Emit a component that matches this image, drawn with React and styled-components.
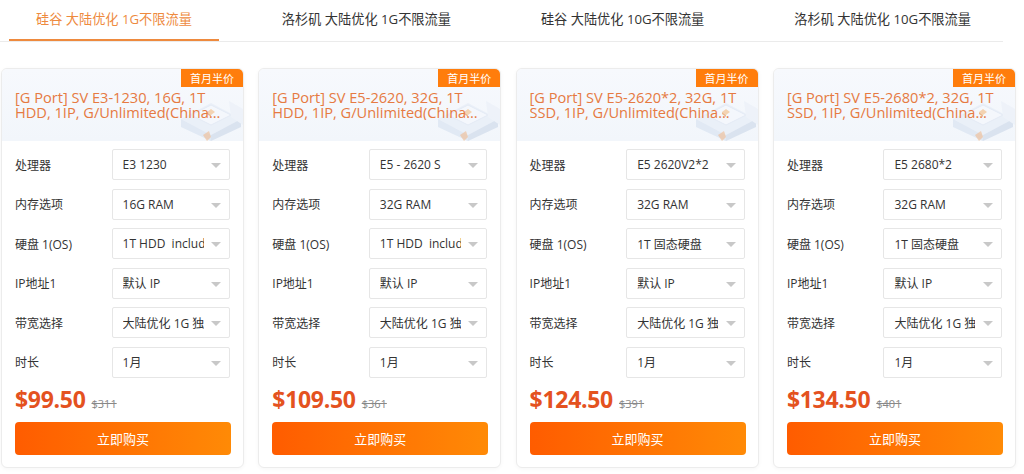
import React from "react";
import styled, { createGlobalStyle } from "styled-components";

const Global = createGlobalStyle`
  html, body { margin: 0; padding: 0; background: #fff; }
  body { font-family: "Open Sans", "Noto Sans CJK SC", sans-serif; color: #333; }
  * { box-sizing: border-box; }
`;

const Page = styled.div`
  width: 1024px;
  height: 474px;
  overflow: hidden;
`;

const Tabs = styled.div`
  display: flex;
  gap: 36px;
  padding-left: 9px;
  width: 1003px;
  border-bottom: 1px solid #ebebeb;
  height: 42px;
`;

const Tab = styled.div`
  padding: 0 27px 3px;
  height: 41px;
  display: flex;
  align-items: center;
  font-size: 13.2px;
  font-family: "Open Sans", "Noto Sans CJK SC", sans-serif;
  color: ${(p) => (p.$active ? "#ee8a3e" : "#333")};
  border-bottom: 2px solid ${(p) => (p.$active ? "#ee8a3e" : "transparent")};
  white-space: nowrap;
`;

const Grid = styled.div`
  display: grid;
  grid-template-columns: repeat(4, 243px);
  column-gap: 14.3px;
  padding-left: 1px;
  margin-top: 26px;
`;

const Card = styled.div`
  border: 1px solid #ececec;
  border-radius: 6px;
  background: #fff;
  box-shadow: 0 1px 4px rgba(0, 0, 0, 0.04);
  overflow: hidden;
  height: 400px;
`;

const Header = styled.div`
  position: relative;
  height: 72px;
  background: linear-gradient(180deg, #f7f9fd 0%, #f2f6fb 100%);
  padding: 21px 14px 0 13px;
`;

const Badge = styled.div`
  position: absolute;
  top: 0;
  right: 0;
  width: 62px;
  height: 18px;
  background: #ff7d0c;
  color: #fff;
  font-size: 11px;
  font-family: "Noto Sans CJK SC", sans-serif;
  display: flex;
  align-items: center;
  justify-content: center;
  z-index: 2;
`;

const Deco = styled.svg`
  position: absolute;
  right: 0;
  bottom: 0;
  z-index: 0;
  opacity: 0.85;
`;

const Title = styled.div`
  position: relative;
  z-index: 1;
  color: #e67a42;
  font-size: 14.6px;
  line-height: 15px;
  font-family: "Open Sans", sans-serif;
  display: -webkit-box;
  -webkit-line-clamp: 2;
  -webkit-box-orient: vertical;
  overflow: hidden;
  word-break: break-word;
`;

const Body = styled.div`
  padding: 8px 13px 0 13px;
  display: flex;
  flex-direction: column;
  gap: 8.5px;
`;

const Row = styled.div`
  display: flex;
  align-items: center;
  height: 31px;
`;

const Label = styled.div`
  width: 97px;
  font-size: 12px;
  color: #333;
  font-family: "Open Sans", "Noto Sans CJK SC", sans-serif;
`;

const Select = styled.div`
  position: relative;
  width: 119px;
  height: 31px;
  border: 1px solid #e6e6e6;
  border-radius: 2px;
  display: flex;
  align-items: center;
  padding-left: 10px;
  background: #fff;
`;

const SelectText = styled.span`
  display: block;
  width: 81px;
  overflow: hidden;
  white-space: pre;
  font-size: 12px;
  color: #333;
  font-family: "Open Sans", "Noto Sans CJK SC", sans-serif;
`;

const Arrow = styled.span`
  position: absolute;
  right: 8px;
  top: 13px;
  width: 0;
  height: 0;
  border-left: 5px solid transparent;
  border-right: 5px solid transparent;
  border-top: 5px solid #c8c8c8;
`;

const PriceRow = styled.div`
  display: flex;
  align-items: baseline;
  gap: 6px;
  height: 36px;
  padding-top: 1px;
  line-height: 24px;
`;

const Price = styled.span`
  color: #e4521f;
  font-size: 23px;
  font-weight: 700;
  font-family: "Open Sans", sans-serif;
  letter-spacing: -0.3px;
`;

const OldPrice = styled.span`
  color: #888;
  font-size: 11px;
  text-decoration: line-through;
  font-family: "Open Sans", sans-serif;
`;

const BuyButton = styled.button`
  display: block;
  width: 216px;
  height: 33px;
  border: none;
  border-radius: 4px;
  background: linear-gradient(90deg, #ff5c00 0%, #ff8a06 100%);
  color: #fff;
  font-size: 13px;
  font-family: "Noto Sans CJK SC", sans-serif;
  cursor: pointer;
`;

const DecoArt = () => (
  <Deco width="70" height="62" viewBox="0 0 70 62">
    <polygon points="8,40 38,24 68,40 38,56" fill="#e9eff8" />
    <polygon points="8,40 38,56 38,62 8,48" fill="#dee7f3" />
    <polygon points="38,56 68,40 68,48 38,62" fill="#d6e0ee" />
    <polygon points="18,36 38,26 58,36 38,46" fill="#f5f8fd" stroke="#e2eaf5" strokeWidth="1" />
    <polygon points="56,22 70,30 70,46 58,38" fill="#edf2f9" />
    <polygon points="34,33 38,30 42,33 38,36" fill="#f3cda6" />
    <polygon points="34,33 38,36 38,38 34,35" fill="#ebb07b" />
    <polygon points="30,56 36,52 38,58 34,62" fill="#f0b27f" opacity="0.6" />
  </Deco>
);

const tabs = [
  "硅谷 大陆优化 1G不限流量",
  "洛杉矶 大陆优化 1G不限流量",
  "硅谷 大陆优化 10G不限流量",
  "洛杉矶 大陆优化 10G不限流量",
];

const products = [
  {
    title: "[G Port] SV E3-1230, 16G, 1T HDD, 1IP, G/Unlimited(China Optimized)",
    cpu: "E3 1230",
    ram: "16G RAM",
    disk: "1T HDD  included",
    price: "$99.50",
    old: "$311",
  },
  {
    title: "[G Port] SV E5-2620, 32G, 1T HDD, 1IP, G/Unlimited(China Optimized)",
    cpu: "E5 - 2620 S",
    ram: "32G RAM",
    disk: "1T HDD  included",
    price: "$109.50",
    old: "$361",
  },
  {
    title: "[G Port] SV E5-2620*2, 32G, 1T SSD, 1IP, G/Unlimited(China Optimized)",
    cpu: "E5 2620V2*2",
    ram: "32G RAM",
    disk: "1T 固态硬盘",
    price: "$124.50",
    old: "$391",
  },
  {
    title: "[G Port] SV E5-2680*2, 32G, 1T SSD, 1IP, G/Unlimited(China Optimized)",
    cpu: "E5 2680*2",
    ram: "32G RAM",
    disk: "1T 固态硬盘",
    price: "$134.50",
    old: "$401",
  },
];

const ProductCard = ({ p }) => {
  const rows = [
    ["处理器", p.cpu],
    ["内存选项", p.ram],
    ["硬盘 1(OS)", p.disk],
    ["IP地址1", "默认 IP"],
    ["带宽选择", "大陆优化 1G 独享"],
    ["时长", "1月"],
  ];
  return (
    <Card>
      <Header>
        <DecoArt />
        <Badge>首月半价</Badge>
        <Title>{p.title}</Title>
      </Header>
      <Body>
        {rows.map(([l, v]) => (
          <Row key={l}>
            <Label>{l}</Label>
            <Select>
              <SelectText>{v}</SelectText>
              <Arrow />
            </Select>
          </Row>
        ))}
        <div>
          <PriceRow>
            <Price>{p.price}</Price>
            <OldPrice>{p.old}</OldPrice>
          </PriceRow>
          <BuyButton>立即购买</BuyButton>
        </div>
      </Body>
    </Card>
  );
};

export default function App() {
  return (
    <Page>
      <Global />
      <Tabs>
        {tabs.map((t, i) => (
          <Tab key={t} $active={i === 0}>
            {t}
          </Tab>
        ))}
      </Tabs>
      <Grid>
        {products.map((p) => (
          <ProductCard key={p.title} p={p} />
        ))}
      </Grid>
    </Page>
  );
}
